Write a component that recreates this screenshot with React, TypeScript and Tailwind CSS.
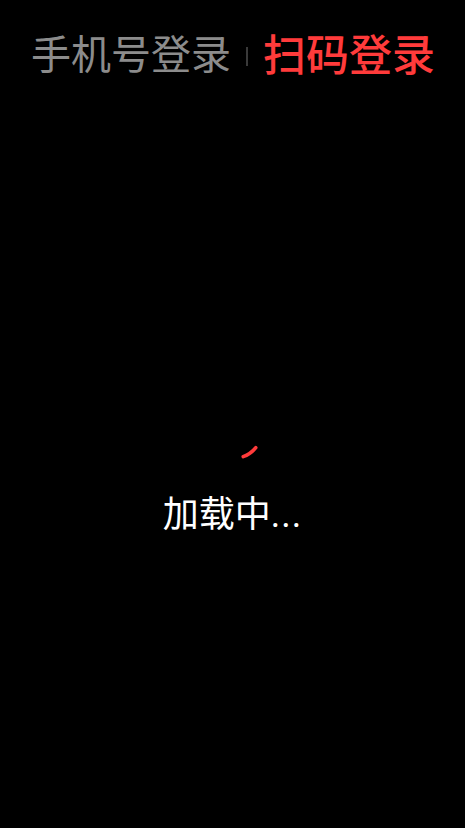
import React from "react";

export default function App() {
  const font = { fontFamily: 'Roboto, "Noto Sans CJK SC", "Noto Sans", sans-serif' };
  return (
    <div className="w-full h-[828px] bg-black overflow-hidden" style={font}>
      <div className="flex items-center justify-center pt-[21px] h-[90px] pl-[1px]">
        <span className="text-[40px] leading-[60px] text-[#8c8c8c]">手机号登录</span>
        <span className="mx-[15px] w-[2px] h-[19px] bg-[#3a3a3a] mt-[2px]" />
        <span className="text-[43px] leading-[60px] font-medium text-[#ff3b3b]">扫码登录</span>
      </div>
      <div className="flex flex-col items-center mt-[303px]">
        <svg width="70" height="70" viewBox="0 0 70 70" className="block">
          <path
            d="M 57.8 54.7 A 30 30 0 0 1 45.2 63.7"
            fill="none"
            stroke="#ff3b3b"
            strokeWidth="3.5"
            strokeLinecap="round"
          />
        </svg>
        <div className="mt-[27px] text-[36px] leading-[50px] text-white">
          加载中<span className="tracking-[1px]">...</span>
        </div>
      </div>
    </div>
  );
}
